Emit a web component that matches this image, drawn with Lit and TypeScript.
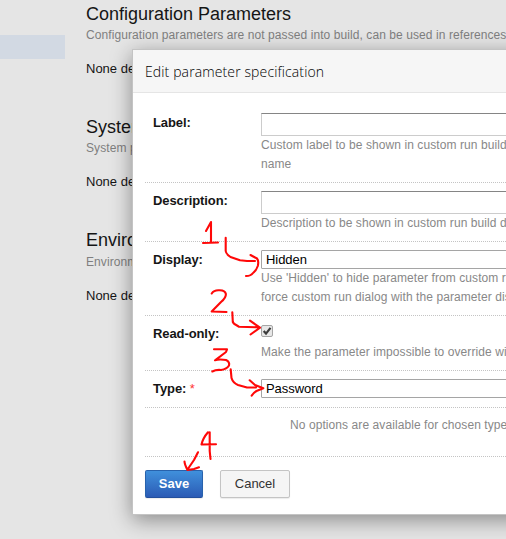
import { LitElement, html, css, svg } from "lit";
import { customElement } from "lit/decorators.js";

const sections = [
  {
    title: "Configuration Parameters",
    note: "Configuration parameters are not passed into build, can be used in references",
  },
  { title: "System Properties", note: "System properties will be passed into the build" },
  { title: "Environment Variables", note: "Environment variables will be added to the environment" },
];

const strokes = [
  // step 1
  "M206 231L211 222V242M203 243L218 242.5",
  "M225.7 237.7V251Q226 254 230.5 257L240 260.3L247 261H255M250.5 255L257 258.5Q259 261 257.8 266Q256 271 253 273Q251 276 246 276",
  // step 2
  "M211.7 293.5Q214 290 219 290.3Q225 290 225.9 294Q226 298 221 302L211.7 311.5L226.5 312",
  "M232.3 312.3L232.8 322Q233 323.5 239 326.7L259 327.3M250 320.7L260 327.7L250.5 334.5",
  // step 3
  "M214 349.3H227L226 352L215 360.3Q219 359 226 360Q230 362 229 365.5Q227 369 221 370Q216 369.5 212.3 371.5",
  "M230.7 369.3L231.5 378Q233 383 238 385L247 387.5H256M249.7 380.3L255 385L263.3 388.3L256.5 391Q254 392.5 251.7 395.7",
  // step 4
  "M208 432.3Q203 438 201.5 444.5L216 444.3M209.7 432.3V451L210.5 459",
  "M198 452.3L194 460L187.5 469.5M184.5 461.5Q184.5 464 187.5 470L194 469L199 467.3",
];

@customElement("app-root")
export class AppRoot extends LitElement {
  static styles = css`
    :host {
      display: block;
      position: relative;
      width: 506px;
      height: 539px;
      overflow: hidden;
      background: #e5e5e5;
      color: #151515;
      font: 13px/19px "Liberation Sans", Arial, sans-serif;
    }
    * { box-sizing: border-box; }
    .page { display: flex; height: 539px; }
    .side { width: 65px; flex: none; padding-top: 35px; }
    .selected { height: 24px; background: #d2d9e3; }
    .content { padding: 2px 0 0 21px; white-space: nowrap; }
    .section { height: 113px; }
    .section:last-child h2 { line-height: 25px; }
    h2 { margin: 0; font-size: 18px; line-height: 24px; font-weight: 400; }
    .note { font-size: 12px; color: #7f7f7f; line-height: 19px; letter-spacing: 0.08px; }
    .none { margin-top: 14px; line-height: 19px; }
    .dialog {
      position: absolute;
      left: 132px;
      top: 49px;
      width: 450px;
      height: 466px;
      border: 1px solid #c4c4c4;
      background: #fff;
      box-shadow: 0 5px 20px rgba(0, 0, 0, 0.4);
    }
    .header {
      height: 43px;
      padding: 0 12px;
      border-bottom: 1px solid #e5e5e5;
      background: #f6f6f6;
      font: 300 14px/43px "Open Sans", sans-serif;
      letter-spacing: 0.12px;
      color: #000;
      white-space: nowrap;
    }
    .row {
      display: flex;
      margin-left: 12px;
      padding: 8px 0 0 8px;
      background: repeating-linear-gradient(90deg, #c4c4c4 0 1px, #fff 1px 2px) left bottom / 100% 1px no-repeat;
      white-space: nowrap;
    }
    .r1 { height: 90px; padding-top: 20px; }
    .r2 { height: 59px; }
    .r3 { height: 74px; }
    .r4 { height: 55px; }
    .r5 { height: 37px; }
    .r6 { height: 49px; padding-left: 145px; }
    .name { width: 108px; flex: none; font-weight: 700; letter-spacing: -0.09px; }
    .star { color: #f33; font-weight: 400; }
    .help { color: #888; font-size: 12px; letter-spacing: 0.08px; }
    .input {
      width: 330px;
      height: 23px;
      border: 1px solid #ccc;
      border-top-color: #858585;
    }
    .select {
      width: 330px;
      height: 19px;
      border: 1px solid #a5a5a5;
      border-radius: 1px;
      padding-left: 4px;
      line-height: 17px;
      letter-spacing: -0.05px;
      color: #000;
    }
    .check { display: block; width: 13px; height: 13px; margin: 1px 0 5px; }
    .footer { display: flex; gap: 17px; padding: 13px 12px; }
    .button {
      height: 28px;
      border: 1px solid #c4c4c4;
      border-radius: 2px;
      background: #f5f5f5;
      color: #333;
      text-align: center;
      line-height: 26px;
      width: 70px;
      box-shadow: 0 1px 1px rgba(0, 0, 0, 0.08);
    }
    .save {
      width: 58px;
      border-color: #2862ac #2862ac #234f9c;
      background: linear-gradient(#4090dc, #2b5bb5);
      color: #fff;
      font-weight: 700;
    }
    .marks { position: absolute; left: 0; top: 0; }
  `;

  render() {
    return html`
      <div class="page">
        <div class="side"><div class="selected"></div></div>
        <div class="content">
          ${sections.map(
            (s) => html`<div class="section">
              <h2>${s.title}</h2>
              <div class="note">${s.note}</div>
              <div class="none">None defined</div>
            </div>`
          )}
        </div>
      </div>
      <div class="dialog">
        <div class="header">Edit parameter specification</div>
        <div class="row r1">
          <div class="name">Label:</div>
          <div><div class="input"></div>
            <div class="help">Custom label to be shown in custom run build<br />name</div></div>
        </div>
        <div class="row r2">
          <div class="name">Description:</div>
          <div><div class="input"></div>
            <div class="help">Description to be shown in custom run build dialog</div></div>
        </div>
        <div class="row r3">
          <div class="name">Display:</div>
          <div><div class="select">Hidden</div>
            <div class="help">Use 'Hidden' to hide parameter from custom run<br />force custom run dialog with the parameter displayed</div></div>
        </div>
        <div class="row r4">
          <div class="name">Read-only:</div>
          <div>
            <svg class="check" viewBox="0 0 13 13">
              <rect x="0.5" y="0.5" width="11" height="11" rx="1.5" fill="#e7e7e7" stroke="#a5a5a5" />
              <path d="M2.7 6L5 8.6L9.5 2.8" fill="none" stroke="#3c3c3c" stroke-width="2.2" />
            </svg>
            <div class="help">Make the parameter impossible to override with</div></div>
        </div>
        <div class="row r5">
          <div class="name">Type: <span class="star">*</span></div>
          <div class="select">Password</div>
        </div>
        <div class="row r6"><div class="help">No options are available for chosen type</div></div>
        <div class="footer">
          <div class="button save">Save</div>
          <div class="button">Cancel</div>
        </div>
      </div>
      <svg class="marks" width="506" height="539" fill="none" stroke="#ff0808" stroke-width="2.1"
        stroke-linecap="round" stroke-linejoin="round">
        ${strokes.map((d) => svg`<path d=${d} />`)}
      </svg>
    `;
  }
}
